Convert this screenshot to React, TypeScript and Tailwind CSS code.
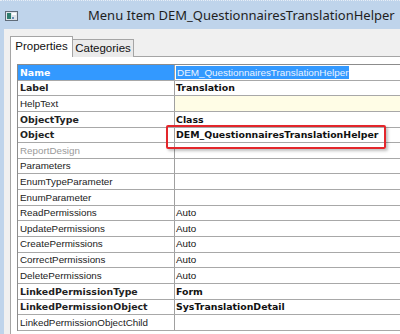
import React from "react"

type Row = {
  name: string
  value?: string
  bold?: boolean
  dim?: boolean
  selected?: boolean
  note?: boolean
}

const ROWS: Row[] = [
  { name: "Name", value: "DEM_QuestionnairesTranslationHelper", bold: true, selected: true },
  { name: "Label", value: "Translation", bold: true },
  { name: "HelpText", note: true },
  { name: "ObjectType", value: "Class", bold: true },
  { name: "Object", value: "DEM_QuestionnairesTranslationHelper", bold: true },
  { name: "ReportDesign", dim: true },
  { name: "Parameters" },
  { name: "EnumTypeParameter" },
  { name: "EnumParameter" },
  { name: "ReadPermissions", value: "Auto" },
  { name: "UpdatePermissions", value: "Auto" },
  { name: "CreatePermissions", value: "Auto" },
  { name: "CorrectPermissions", value: "Auto" },
  { name: "DeletePermissions", value: "Auto" },
  { name: "LinkedPermissionType", value: "Form", bold: true },
  { name: "LinkedPermissionObject", value: "SysTranslationDetail", bold: true },
  { name: "LinkedPermissionObjectChild" },
]

const normal = "font-['Liberation_Sans',Arial,sans-serif] text-[9.8px]"
const heavy = "font-['DejaVu_Sans',Verdana,sans-serif] text-[9.4px] font-bold"

function WindowIcon() {
  return (
    <svg width="13" height="10" viewBox="0 0 13 10" className="shrink-0">
      <rect x="0.5" y="0.5" width="12" height="9" fill="#dfe4ea" stroke="#5f6b78" />
      <rect x="2" y="2" width="4" height="6" fill="#2f7d6e" />
      <rect x="7" y="2" width="4" height="2" fill="#ffffff" />
      <rect x="7" y="6" width="2" height="2" fill="#6a8fb5" />
    </svg>
  )
}

function PropRow({ row }: { row: Row }) {
  const labelTone = row.selected
    ? "bg-[#3399ff] text-white"
    : row.dim
      ? "bg-white text-[#9a9a9a]"
      : "bg-white text-[#222]"
  return (
    <div className="flex h-[15.65px] border-b border-[#a8a8a8]">
      <div className={`w-[156px] shrink-0 flex items-center pl-[2px] leading-none ${row.bold ? heavy : normal} ${labelTone}`}>
        {row.name}
      </div>
      <div className="w-px bg-[#a0a0a0] shrink-0" />
      <div
        className={`flex-1 flex items-center pl-[1px] leading-none text-[#111] ${row.bold ? heavy : normal} ${row.note ? "bg-[#fffde6]" : "bg-white"}`}
      >
        {row.value && (
          <span className={row.selected ? "bg-[#3399ff] text-[#eaf3ff] px-[1px] font-normal font-['Liberation_Sans',Arial,sans-serif] text-[9.9px] leading-[13px]" : ""}>
            {row.value}
          </span>
        )}
      </div>
    </div>
  )
}

export default function App() {
  return (
    <div className="relative w-[400px] h-[334px] overflow-hidden bg-[#bfd4eb] flex flex-col">
      {/* Title bar */}
      <div className="h-[29px] shrink-0 flex items-center pl-[5px] pt-[2px] border-t border-dotted border-[#e8eef6]">
        <WindowIcon />
        <div className="ml-[70px] font-['Noto_Sans',sans-serif] text-[13px] text-[#1e1e1e] whitespace-nowrap">
          Menu Item DEM_QuestionnairesTranslationHelper
        </div>
      </div>

      {/* Body */}
      <div className="flex-1 ml-[4px] bg-[#f0f0f0] pt-[7px] pl-[6px]">
        {/* Tabs */}
        <div className="flex items-end h-[21px] font-['Liberation_Sans',Arial,sans-serif] text-[11.5px] text-[#111]">
          <div className="h-[21px] w-[63px] bg-white border border-b-0 border-[#a5a5a5] flex items-center justify-center relative z-10">
            Properties
          </div>
          <div className="h-[18px] w-[61px] bg-[#eaeaea] border border-l-0 border-b-0 border-[#a5a5a5] flex items-center justify-center">
            Categories
          </div>
        </div>
        {/* Tab page */}
        <div className="h-full bg-white border-t border-l border-[#a5a5a5] -mt-px pt-[7px] pl-[6px]">
          <div className="border-t border-l border-[#8c8c8c]">
            {ROWS.map((r) => (
              <PropRow key={r.name} row={r} />
            ))}
          </div>
        </div>
      </div>

      {/* Annotation box */}
      <div className="absolute left-[166px] top-[125px] w-[220px] h-[24px] border-2 border-[#e3262b] rounded-[2px] shadow-[2px_2px_3px_rgba(0,0,0,0.25)]" />
    </div>
  )
}
